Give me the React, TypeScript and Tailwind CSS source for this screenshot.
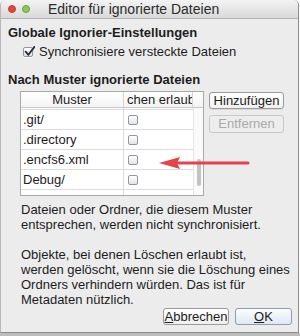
import React from "react";

function Box({ checked = false }: { checked?: boolean }) {
  return (
    <div className="relative w-[10px] h-[10px] rounded-[2px] border border-[#8f96a0] bg-gradient-to-b from-white to-[#e4e4e4] shadow-[0_1px_0_rgba(255,255,255,0.8)]">
      {checked && (
        <svg
          viewBox="0 0 10 10"
          className="absolute left-[0px] top-[-2px] w-[11px] h-[11px]"
        >
          <path
            d="M1.5 5.2 L4 8 L9.5 0.8"
            fill="none"
            stroke="#2a2f38"
            strokeWidth="1.7"
            strokeLinecap="round"
            strokeLinejoin="round"
          />
        </svg>
      )}
    </div>
  );
}

const rows = [".csync_journal.db", ".git/", ".directory", ".encfs6.xml", "Debug/", "Desktop.ini"];

export default function App() {
  return (
    <div className="w-[300px] h-[336px] bg-white font-['Liberation_Sans',Arial,sans-serif] text-[#1c1c1c] overflow-hidden">
      <div className="relative w-[299px] h-[333px] bg-[#ececec] rounded-t-[5px] border-l border-r border-b border-l-[#b8b8b8] border-r-[#8e8e8e] border-b-[#8a8a8a] flex flex-col">
        {/* Titelleiste */}
        <div className="h-[19px] rounded-t-[5px] bg-gradient-to-b from-[#f3f3f3] to-[#d9d9d9] border-b border-[#b4b4b4] flex items-center">
          <div className="flex items-center gap-[6px] pl-[7px]">
            <div className="w-[8px] h-[8px] rounded-full bg-[#e5453f] border border-[#c23a33]" />
            <div className="w-[8px] h-[8px] rounded-full bg-[#8ec85a] border border-[#6aa23c]" />
          </div>
          <div className="ml-[18px] text-[14px] leading-[16px] text-[#2b2b2b]">
            Editor für ignorierte Dateien
          </div>
        </div>

        <div className="flex flex-col pl-[7px] pr-[7px]">
          <div className="mt-[6px] text-[13px] leading-[16px] font-bold">
            Globale Ignorier-Einstellungen
          </div>
          <div className="mt-[3px] h-[16px] flex items-center pl-[15px] gap-[6px]">
            <Box checked />
            <span className="text-[13px] leading-[16px]">
              Synchronisiere versteckte Dateien
            </span>
          </div>
          <div className="mt-[12px] text-[13px] leading-[16px] font-bold">
            Nach Muster ignorierte Dateien
          </div>

          <div className="mt-[3px] flex items-start pl-[12px]">
            {/* Tabelle */}
            <div className="w-[184px] h-[105px] border border-[#a9a9a9] bg-white flex flex-col overflow-hidden">
              <div className="h-[16px] shrink-0 flex border-b border-[#c8c8c8] bg-gradient-to-b from-white to-[#f4f4f4] text-[13px] leading-[15px]">
                <div className="w-[103px] border-r border-[#d4d4d4] text-center">
                  Muster
                </div>
                <div className="w-[69px] border-r border-[#d4d4d4] overflow-hidden whitespace-nowrap pl-[3px]">
                  chen erlaubt
                </div>
              </div>
              <div className="flex flex-1 overflow-hidden">
                <div className="w-[172px] overflow-hidden">
                  <div className="-mt-[18px]">
                    {rows.map((r) => (
                      <div
                        key={r}
                        className="h-[20px] flex border-b border-[#dcdcdc] text-[13px]"
                      >
                        <div className="w-[103px] border-r border-[#dcdcdc] pl-[2px] flex items-center whitespace-nowrap">
                          {r}
                        </div>
                        <div className="flex-1 flex items-center pl-[4px]">
                          <Box />
                        </div>
                      </div>
                    ))}
                  </div>
                </div>
                <div className="w-[10px] border-l border-[#e6e6e6] bg-[#fafafa] pt-[51px] pl-[3px]">
                  <div className="w-[4px] h-[27px] rounded-full bg-[#c2c2c2]" />
                </div>
              </div>
            </div>

            <div className="ml-[5px] mt-[1px] flex flex-col gap-[6px]">
              <div className="w-[75px] h-[17px] rounded-[3px] border border-[#9a9a9a] bg-gradient-to-b from-white to-[#f1f1f1] text-[13px] leading-[15px] text-center shadow-[0_1px_0_rgba(0,0,0,0.08)]">
                Hinzufügen
              </div>
              <div className="w-[75px] h-[18px] rounded-[3px] border border-[#c9c9c9] bg-[#ededed] text-[13px] leading-[16px] text-center text-[#a9a9a9]">
                Entfernen
              </div>
            </div>
          </div>

          <div className="mt-[6px] pl-[13px] text-[13px] leading-[15px] whitespace-nowrap">
            <p>
              Dateien oder Ordner, die diesem Muster
              <br />
              entsprechen, werden nicht synchronisiert.
            </p>
            <p className="mt-[15px]">
              Objekte, bei denen Löschen erlaubt ist,
              <br />
              werden gelöscht, wenn sie die Löschung eines
              <br />
              Ordners verhindern würden. Das ist für
              <br />
              Metadaten nützlich.
            </p>
          </div>
        </div>

        <div className="mt-auto mb-[7px] flex justify-end gap-[6px] pr-[6px]">
          <div className="w-[66px] h-[17px] rounded-[3px] border border-[#9a9a9a] bg-gradient-to-b from-white to-[#efefef] text-[13px] leading-[15px] text-center">
            <span className="underline underline-offset-[1px]">A</span>bbrechen
          </div>
          <div className="w-[57px] h-[17px] rounded-[3px] border border-[#8d9cb0] bg-gradient-to-b from-[#fbfdff] to-[#dfe8f2] text-[13px] leading-[15px] text-center">
            <span className="underline underline-offset-[1px]">O</span>K
          </div>
        </div>

        {/* Pfeil */}
        <svg
          className="absolute left-[155px] top-[155px] w-[95px] h-[16px]"
          viewBox="0 0 95 16"
        >
          <path d="M22 8 L92 8" stroke="#e5434b" strokeWidth="3" strokeLinecap="round" />
          <path d="M3 8 L24 2 L21 8 L24 14 Z" fill="#e5434b" />
        </svg>
      </div>
      <div className="h-[3px] bg-[#bdbdbd]" />
    </div>
  );
}
